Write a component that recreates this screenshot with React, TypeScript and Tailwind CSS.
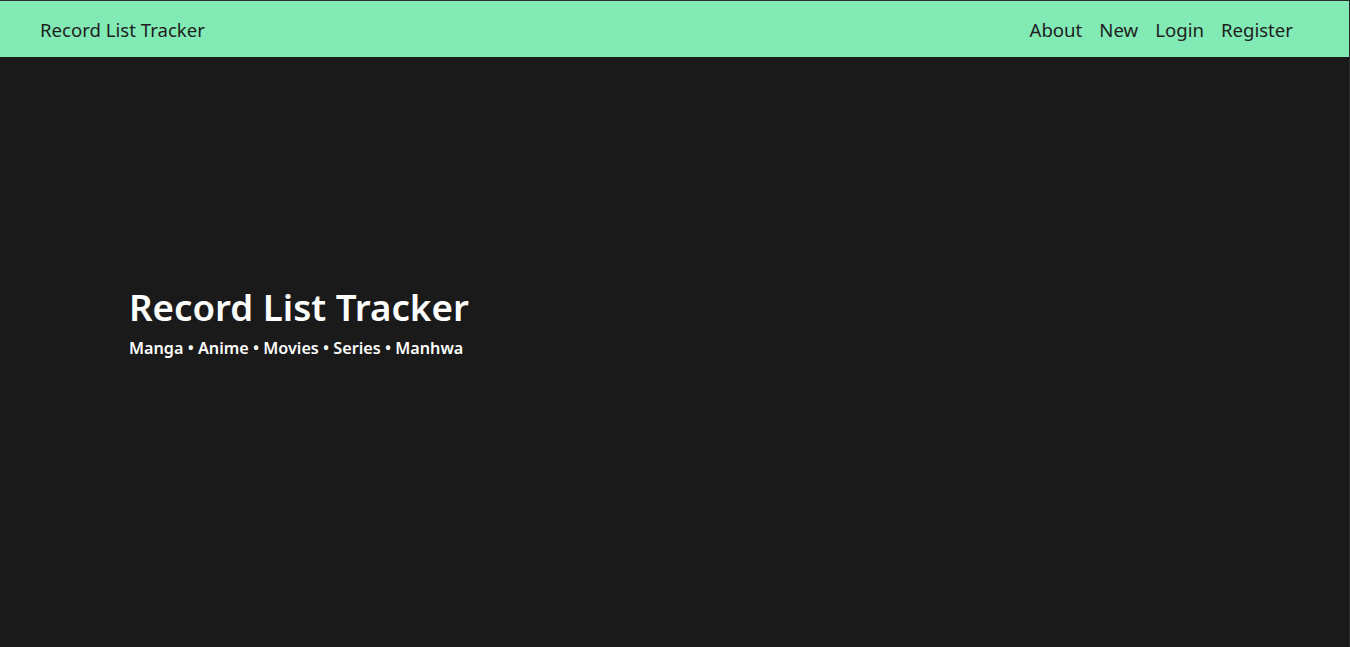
export default function App() {
  return (
    <div className="min-h-[647px] bg-[#1a1a1a] border-t border-r border-[#2c2c2c] flex flex-col" style={{ fontFamily: '"Noto Sans", "Open Sans", sans-serif' }}>
      <nav className="h-[56px] bg-[#82eab4] flex items-center justify-between pl-[40px] pr-[56px] pt-[2px] text-[#1e1e1e] text-[18.6px]">
        <span>Record List Tracker</span>
        <div className="flex gap-[17px]">
          <span>About</span>
          <span>New</span>
          <span>Login</span>
          <span>Register</span>
        </div>
      </nav>
      <main className="pl-[129px] pt-[228px] text-white">
        <h1 className="text-[36.7px] font-semibold leading-[44px]">Record List Tracker</h1>
        <p className="text-[16.2px] font-semibold mt-[7px]">Manga • Anime • Movies • Series • Manhwa</p>
      </main>
    </div>
  );
}
